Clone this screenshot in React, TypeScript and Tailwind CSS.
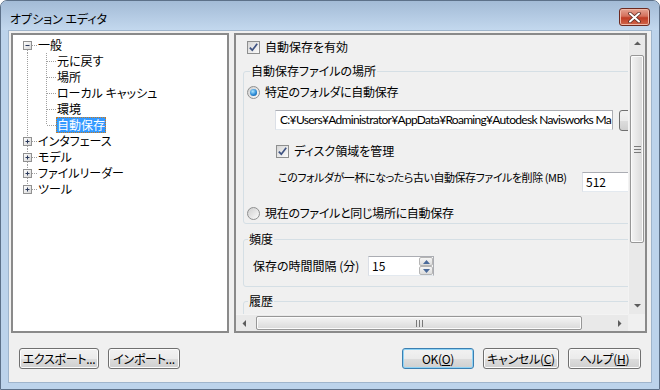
import React from "react";

const font = "font-['Noto_Sans_CJK_JP','Noto_Sans',sans-serif] [font-feature-settings:'palt']";

const Check = () => (
  <span className="w-[13px] h-[13px] shrink-0 border border-[#8e8f8f] bg-gradient-to-br from-[#d6d6d6] to-[#fbfbfb] flex items-center justify-center">
    <svg width="11" height="11" viewBox="0 0 11 11">
      <path d="M1.8 5.6 L4.3 8.2 L9.2 1.8" fill="none" stroke="#3f5382" strokeWidth="1.7" />
    </svg>
  </span>
);

const Radio = ({ on }: { on?: boolean }) => (
  <span className="w-[13px] h-[13px] shrink-0 rounded-full border border-[#8e8f8f] bg-gradient-to-br from-[#cfcfcf] to-[#fbfbfb] flex items-center justify-center">
    {on && <span className="w-[7px] h-[7px] rounded-full bg-[radial-gradient(circle_at_40%_35%,#aee6ff,#2a8ad6_55%,#0d4c8c)]" />}
  </span>
);

type Node = { label: string; level: number; exp?: "minus" | "plus"; first?: boolean; last?: boolean; sel?: boolean };

const tree: Node[] = [
  { label: "一般", level: 0, exp: "minus", first: true },
  { label: "元に戻す", level: 1 },
  { label: "場所", level: 1 },
  { label: "ローカル キャッシュ", level: 1 },
  { label: "環境", level: 1 },
  { label: "自動保存", level: 1, last: true, sel: true },
  { label: "インタフェース", level: 0, exp: "plus" },
  { label: "モデル", level: 0, exp: "plus" },
  { label: "ファイルリーダー", level: 0, exp: "plus" },
  { label: "ツール", level: 0, exp: "plus", last: true },
];

const dot = { stroke: "#a0a0a0", strokeDasharray: "1 1" };

const TreeRow = ({ n }: { n: Node }) => (
  <div className="flex h-[16px] items-center">
    <svg width="18" height="16" className="shrink-0">
      {n.level === 0 ? (
        <>
          {!n.first && <line x1="8.5" y1="0" x2="8.5" y2="4" {...dot} />}
          {!n.last && <line x1="8.5" y1="13" x2="8.5" y2="16" {...dot} />}
          <line x1="13" y1="8.5" x2="18" y2="8.5" {...dot} />
          <rect x="4.5" y="4.5" width="8" height="8" fill="url(#bx)" stroke="#919191" />
          <line x1="6.5" y1="8.5" x2="10.5" y2="8.5" stroke="#2b3a5c" />
          {n.exp === "plus" && <line x1="8.5" y1="6.5" x2="8.5" y2="10.5" stroke="#2b3a5c" />}
        </>
      ) : (
        <line x1="8.5" y1="0" x2="8.5" y2="16" {...dot} />
      )}
    </svg>
    {n.level === 1 && (
      <svg width="19" height="16" className="shrink-0">
        <line x1="9.5" y1="0" x2="9.5" y2={n.last ? 8 : 16} {...dot} />
        <line x1="10" y1="8.5" x2="19" y2="8.5" {...dot} />
      </svg>
    )}
    <span
      className={
        "h-[16px] leading-[15px] px-[1px] whitespace-nowrap " +
        (n.sel ? "bg-[#3399ff] text-white outline-1 outline-dotted outline-[#c87a1e] -outline-offset-1" : "text-black")
      }
    >
      {n.label}
    </span>
  </div>
);

const Btn = ({ w, def, children }: { w: string; def?: boolean; children: React.ReactNode }) => (
  <button
    className={
      w +
      " h-[21px] rounded-[3px] border text-[12px] leading-[19px] tracking-[-0.3px] text-black bg-[linear-gradient(#f2f2f2,#ebebeb_50%,#dddddd_51%,#cfcfcf)] " +
      (def ? "border-[#3c7fb1] shadow-[inset_0_0_0_1px_#8fd3f5]" : "border-[#707070] shadow-[inset_0_0_0_1px_#fcfcfc]")
    }
  >
    {children}
  </button>
);

const Tri = ({ d }: { d: string }) => (
  <svg width="17" height="17" viewBox="0 0 17 17">
    <path d={d} fill="#5c5c5c" />
  </svg>
);

export default function App() {
  return (
    <div className={"w-[660px] h-[390px] flex flex-col rounded-t-[7px] border border-[#5d7189] bg-[#bcd3eb] text-[12px] " + font}>
      <svg width="0" height="0" className="absolute">
        <defs>
          <linearGradient id="bx" x1="0" y1="0" x2="1" y2="1">
            <stop offset="0" stopColor="#ffffff" />
            <stop offset="1" stopColor="#d6d6d6" />
          </linearGradient>
        </defs>
      </svg>
      {/* title bar */}
      <div className="h-[29px] flex items-center pl-[9px] pr-[9px] rounded-t-[6px] bg-gradient-to-b from-[#a3bbd6] to-[#c3d8ee]">
        <span className="text-[12px] text-black pt-[6px]">オプション エディタ</span>
        <div className="ml-auto mt-[3px] w-[31px] h-[18px] rounded-[3px] border border-[#6d2a20] bg-[linear-gradient(#e5a493,#d4705c_45%,#bf3c25_55%,#d0664a)] flex items-center justify-center shadow-[inset_0_0_0_1px_#f0b8a8]">
          <svg width="13" height="11" viewBox="0 0 13 11">
            <path d="M2 1.5 L11 9.5 M11 1.5 L2 9.5" stroke="#5a2a22" strokeWidth="3.6" strokeLinecap="round" />
            <path d="M2 1.5 L11 9.5 M11 1.5 L2 9.5" stroke="#ffffff" strokeWidth="2" strokeLinecap="round" />
          </svg>
        </div>
      </div>

      {/* client */}
      <div className="mx-[7px] h-[353px] bg-[#f0f0f0] border border-[#9fb5cc] flex flex-col">
        <div className="flex gap-[5px] pl-[2px] pt-[2px]">
          {/* tree */}
          <div className="w-[218px] h-[300px] border-2 border-[#8a8a8a] bg-white pt-[2px] pl-[6px]">
            {tree.map((n) => (
              <TreeRow key={n.label} n={n} />
            ))}
          </div>

          {/* right panel */}
          <div className="w-[413px] h-[300px] border-2 border-[#8a8a8a] flex flex-col">
            <div className="flex h-[279px]">
              <div className="w-[392px] overflow-hidden">
                <div className="w-[420px]">
                  <div className="flex items-center h-[16px] mt-[4px] pl-[11px] gap-[5px]">
                    <Check />
                    <span>自動保存を有効</span>
                  </div>

                  <fieldset className="ml-[7px] mt-[8px] w-[410px] border border-[#d5dfe5] rounded-[3px] px-[3px] pb-[2px]">
                    <legend className="ml-[3px] px-[1px] leading-[16px]">自動保存ファイルの場所</legend>
                    <div className="flex items-center h-[16px] mt-[5px] gap-[5px]">
                      <Radio on />
                      <span className="tracking-[-0.3px]">特定のフォルダに自動保存</span>
                    </div>
                    <div className="flex mt-[10px] pl-[28px] gap-[6px]">
                      <div className="w-[338px] h-[20px] border border-[#abadb3] border-b-[#e3e9ef] border-l-[#dbdfe6] bg-white pl-[4px] leading-[18px] whitespace-nowrap overflow-hidden font-['Lato',sans-serif] tracking-[-0.7px]">
                        C:¥Users¥Administrator¥AppData¥Roaming¥Autodesk Navisworks Ma
                      </div>
                      <div className="w-[24px] h-[21px] rounded-[3px] border border-[#707070] bg-[linear-gradient(#f2f2f2,#ebebeb_50%,#dddddd_51%,#cfcfcf)]" />
                    </div>
                    <div className="flex items-center h-[16px] mt-[12px] pl-[29px] gap-[5px]">
                      <Check />
                      <span>ディスク領域を管理</span>
                    </div>
                    <div className="flex items-start mt-[10px] pl-[31px]">
                      <span className="w-[304px] shrink-0 leading-[16px] whitespace-nowrap text-[11px] tracking-[-0.45px]">
                        このフォルダが一杯になったら古い自動保存ファイルを削除 (MB)
                      </span>
                      <div className="mt-[3px] w-[60px] h-[20px] border border-[#abadb3] border-b-[#e3e9ef] border-l-[#dbdfe6] bg-white px-[3px] leading-[18px]">
                        512
                      </div>
                    </div>
                    <div className="flex items-center h-[16px] mt-[13px] gap-[5px]">
                      <Radio />
                      <span className="tracking-[-0.3px]">現在のファイルと同じ場所に自動保存</span>
                    </div>
                  </fieldset>

                  <fieldset className="ml-[7px] mt-[7px] w-[410px] border border-[#d5dfe5] rounded-[3px] px-[3px] pb-[10px]">
                    <legend className="ml-[1px] px-[1px] leading-[16px]">頻度</legend>
                    <div className="flex items-center mt-[9px] pl-[6px]">
                      <span className="w-[115px] shrink-0">保存の時間間隔 (分)</span>
                      <div className="flex w-[66px] h-[20px] border border-[#abadb3] border-b-[#e3e9ef] border-l-[#dbdfe6] bg-white">
                        <span className="flex-1 px-[3px] leading-[18px]">15</span>
                        <div className="w-[14px] flex flex-col">
                          <div className="flex-1 border border-[#b5b5b5] rounded-[2px] bg-gradient-to-b from-[#f6f6f6] to-[#dcdcdc] flex items-center justify-center">
                            <svg width="7" height="4"><path d="M0 4 L3.5 0 L7 4Z" fill="#4a6a9a" /></svg>
                          </div>
                          <div className="flex-1 border border-[#b5b5b5] rounded-[2px] bg-gradient-to-b from-[#f6f6f6] to-[#dcdcdc] flex items-center justify-center">
                            <svg width="7" height="4"><path d="M0 0 L3.5 4 L7 0Z" fill="#4a6a9a" /></svg>
                          </div>
                        </div>
                      </div>
                    </div>
                  </fieldset>

                  <fieldset className="ml-[7px] mt-[6px] w-[410px] h-[60px] border border-[#d5dfe5] rounded-[3px] px-[3px]">
                    <legend className="ml-[1px] px-[1px] leading-[16px]">履歴</legend>
                  </fieldset>
                </div>
              </div>

              {/* vertical scrollbar */}
              <div className="w-[17px] flex flex-col bg-[#e9e9e9] border-l border-[#f3f3f3]">
                <Tri d="M5 10 L8.5 6.5 L12 10Z" />
                <div className="flex-1">
                  <div className="mt-[3px] mx-[1px] h-[188px] rounded-[2px] border border-[#979797] bg-gradient-to-r from-[#f4f4f4] to-[#d9d9d9] flex items-center justify-center shadow-[inset_0_0_0_1px_#fbfbfb]">
                    <svg width="7" height="7"><path d="M0 0.5 H7 M0 3.5 H7 M0 6.5 H7" stroke="#7a7a7a" /></svg>
                  </div>
                </div>
                <Tri d="M5 7 L8.5 10.5 L12 7Z" />
              </div>
            </div>

            {/* horizontal scrollbar */}
            <div className="flex h-[17px]">
              <div className="w-[392px] flex bg-[#e9e9e9] border-t border-[#f3f3f3]">
                <Tri d="M10 5 L6.5 8.5 L10 12Z" />
                <div className="ml-[3px] my-[1px] w-[326px] rounded-[2px] border border-[#979797] bg-gradient-to-b from-[#f4f4f4] to-[#d9d9d9] flex items-center justify-center shadow-[inset_0_0_0_1px_#fbfbfb]">
                  <svg width="7" height="7"><path d="M0.5 0 V7 M3.5 0 V7 M6.5 0 V7" stroke="#7a7a7a" /></svg>
                </div>
                <div className="flex-1" />
                <Tri d="M7 5 L10.5 8.5 L7 12Z" />
              </div>
              <div className="w-[17px] bg-[#f0f0f0]" />
            </div>
          </div>
        </div>

        {/* buttons */}
        <div className="flex mt-[15px] pl-[10px] pr-[10px]">
          <Btn w="w-[80px]">エクスポート...</Btn>
          <div className="ml-[9px]">
            <Btn w="w-[72px]">インポート...</Btn>
          </div>
          <div className="ml-auto flex gap-[9px]">
            <Btn w="w-[72px]" def>
              OK(<u>O</u>)
            </Btn>
            <Btn w="w-[76px]">
              キャンセル(<u>C</u>)
            </Btn>
            <Btn w="w-[73px]">
              ヘルプ(<u>H</u>)
            </Btn>
          </div>
        </div>
      </div>
    </div>
  );
}
